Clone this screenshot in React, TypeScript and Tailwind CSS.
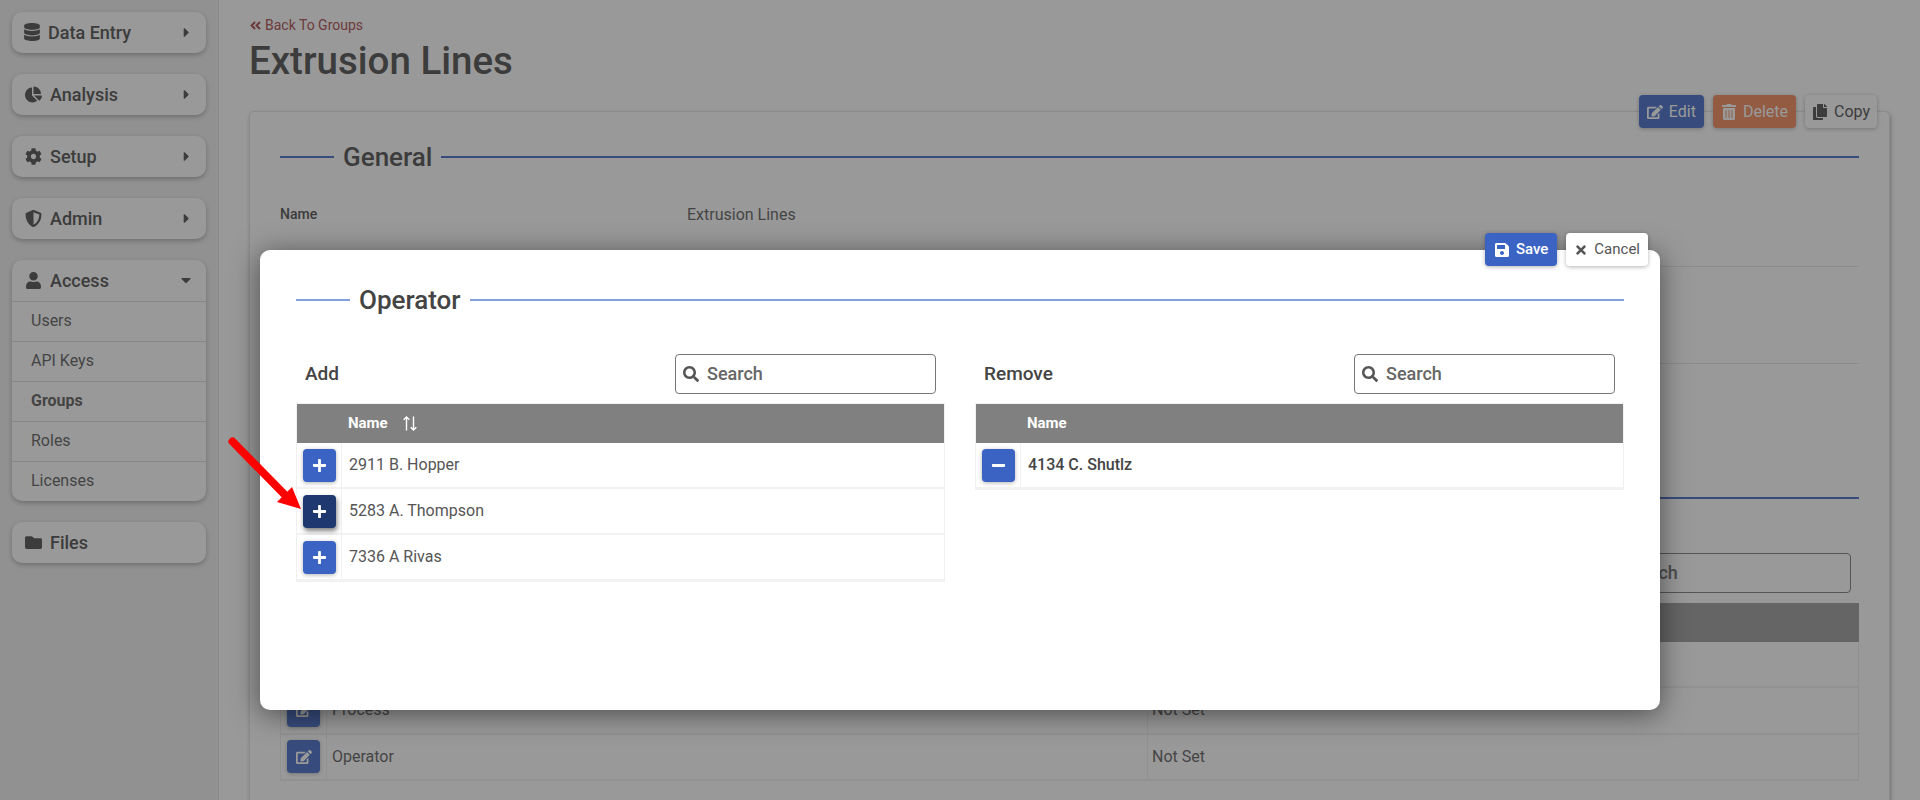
import { useState } from "react";
import {
  FaAngleDoubleLeft,
  FaCaretDown,
  FaCaretRight,
  FaChartPie,
  FaCog,
  FaCopy,
  FaDatabase,
  FaEdit,
  FaFolder,
  FaMinus,
  FaPlus,
  FaSave,
  FaSearch,
  FaShieldAlt,
  FaTimes,
  FaTrashAlt,
  FaUser,
} from "react-icons/fa";

const fontClass = "font-['Roboto','Liberation_Sans',sans-serif]";

function NavCard({
  icon,
  label,
  open,
  iconClass = "w-[18px]",
}: {
  icon: React.ReactNode;
  label: string;
  open?: boolean;
  iconClass?: string;
}) {
  return (
    <div className="flex h-[41px] items-center pb-[1px] pl-3 pr-3 text-[18px] font-medium text-[#444]">
      <span className={`mr-2 flex justify-center ${iconClass}`}>{icon}</span>
      <span className="flex-1">{label}</span>
      {open === undefined ? null : open ? <FaCaretDown size={16} /> : <FaCaretRight size={15} />}
    </div>
  );
}

function Sidebar() {
  const cardClass = "rounded-[10px] bg-white shadow-[0_2px_5px_rgba(0,0,0,0.3)]";
  const subItems = ["Users", "API Keys", "Groups", "Roles", "Licenses"];

  return (
    <aside className="flex w-[219px] shrink-0 flex-col gap-[21px] border-r border-[#dcdcdc] bg-[#efefef] pl-3 pr-3 pt-3">
      <div className={cardClass}>
        <NavCard icon={<FaDatabase size={18} />} iconClass="w-4" label="Data Entry" open={false} />
      </div>
      <div className={cardClass}>
        <NavCard icon={<FaChartPie size={17} />} label="Analysis" open={false} />
      </div>
      <div className={cardClass}>
        <NavCard icon={<FaCog size={17} />} label="Setup" open={false} />
      </div>
      <div className={cardClass}>
        <NavCard icon={<FaShieldAlt size={17} />} label="Admin" open={false} />
      </div>
      <div className={cardClass}>
        <NavCard icon={<FaUser size={17} />} label="Access" open={true} />
        {subItems.map((item) => (
          <div
            key={item}
            className={`flex h-10 items-center border-t border-[#d8d8d8] pl-[19px] pb-[2px] text-[16px] text-[#555] ${
              item === "Groups" ? "font-bold" : ""
            }`}
          >
            {item}
          </div>
        ))}
      </div>
      <div className={cardClass}>
        <NavCard icon={<FaFolder size={17} />} label="Files" />
      </div>
    </aside>
  );
}

function SectionTitle({ title, color }: { title: string; color: string }) {
  return (
    <div className="flex h-6 items-center gap-[9px]">
      <div className={`h-[2px] w-[54px] ${color}`} />
      <span className="text-[26px] font-medium leading-none text-[#444]">{title}</span>
      <div className={`h-[2px] flex-1 ${color}`} />
    </div>
  );
}

function SearchBox() {
  return (
    <div className="flex h-10 w-[261px] items-center gap-[8px] rounded border border-[#777] pl-[7px]">
      <FaSearch size={16} className="shrink-0 text-[#555]" />
      <input placeholder="Search" className="w-full bg-transparent pb-[2px] text-[18px] font-medium outline-none placeholder:text-[#666]" />
    </div>
  );
}

function ActionButton({ icon, label, className }: { icon: React.ReactNode; label: string; className: string }) {
  return (
    <button className={`flex h-[33px] items-center gap-[6px] rounded shadow-[0_1px_4px_rgba(0,0,0,0.3)] ${className}`}>
      {icon}
      {label}
    </button>
  );
}

// page under the modal
function DetailCard() {
  const rows = [
    { name: "Line", value: "" },
    { name: "Process", value: "Not Set" },
    { name: "Operator", value: "Not Set" },
  ];

  return (
    <div className="relative mt-[28px] h-[800px] rounded-[5px] border border-[#e2e2e2] bg-white px-[30px] pt-[33px] shadow-[1px_2px_4px_rgba(0,0,0,0.3)]">
      <div className="absolute -top-[17px] right-[12px] flex gap-[9px]">
        <ActionButton icon={<FaEdit size={16} />} label="Edit" className="bg-[#3a63c4] px-[8px] text-[16px] text-white" />
        <ActionButton icon={<FaTrashAlt size={16} />} label="Delete" className="bg-[#f08250] px-[8px] text-[16px] text-white" />
        <ActionButton icon={<FaCopy size={16} />} label="Copy" className="bg-white px-[7px] text-[16px] text-[#444]" />
      </div>

      <SectionTitle title="General" color="bg-[#3a63c4]" />

      <div className="mt-[21px] flex h-[77px] items-start border-b border-[#e4e4e4] pt-[14px] text-[#444]">
        <span className="w-[407px] text-[14px] font-medium">Name</span>
        <span className="-mt-[1px] text-[16px] text-[#555]">Extrusion Lines</span>
      </div>
      <div className="h-[97px] border-b border-[#e4e4e4]" />
      <div className="h-[135px] pt-[133px]">
        <div className="h-[2px] bg-[#3a63c4]" />
      </div>

      <div className="mt-[54px] flex justify-end pr-[8px]">
        <SearchBox />
      </div>

      <div className="mt-[10px] flex h-[39px] items-center bg-[#969696]" />
      {rows.map((row) => (
        <div key={row.name} className="flex h-[46.3px] items-center border-x border-b-2 border-[#eee] text-[16px] text-[#555]">
          <div className="flex h-full w-[46px] items-center justify-center border-r border-[#eee]">
            <span className="flex h-[33px] w-[33px] items-center justify-center rounded bg-[#3a63c4] text-white shadow-[0_1px_4px_rgba(0,0,0,0.3)]">
              <FaEdit size={16} />
            </span>
          </div>
          <div className="flex h-full w-[821px] items-center border-r border-[#eee] pl-[5px]">{row.name}</div>
          <div className="pl-[4px]">{row.value}</div>
        </div>
      ))}
    </div>
  );
}

function PersonTable({
  rows,
  sortable,
  minus,
}: {
  rows: { name: string; active?: boolean }[];
  sortable?: boolean;
  minus?: boolean;
}) {
  return (
    <div className="border border-[#f0f0f0]">
      <div className="flex h-[39px] items-center bg-[#808080] pl-[51px] text-[15px] font-bold text-white">
        Name
        {sortable && (
          <svg viewBox="0 0 16 16" className="ml-[14px] h-[17px] w-[16px]" fill="none" stroke="white" strokeWidth="1.4">
            <path d="M4.5 15V1.5M1.7 4.3 4.5 1.5l2.8 2.8M11.5 1v13.5M8.7 11.7l2.8 2.8 2.8-2.8" />
          </svg>
        )}
      </div>
      {rows.map((row) => (
        <div key={row.name} className="flex h-[46px] items-center border-b-2 border-[#f2f2f2] text-[16px] text-[#555]">
          <div className="flex h-full w-[45px] items-center justify-center border-r border-[#f2f2f2]">
            <button
              className={`flex h-[33px] w-[33px] items-center justify-center rounded text-white ${
                row.active
                  ? "bg-[#1f3870] shadow-[1px_3px_5px_rgba(0,0,0,0.5)]"
                  : "bg-[#3a63c4] shadow-[0_1px_4px_rgba(0,0,0,0.3)]"
              }`}
            >
              {minus ? <FaMinus size={15} /> : <FaPlus size={15} />}
            </button>
          </div>
          <span className={`pl-[7px] ${minus ? "font-medium text-[#444]" : ""}`}>{row.name}</span>
        </div>
      ))}
    </div>
  );
}

function OperatorModal() {
  const [addRows] = useState([
    { name: "2911 B. Hopper" },
    { name: "5283 A. Thompson", active: true },
    { name: "7336 A Rivas" },
  ]);

  return (
    <div className="absolute left-[260px] top-[250px] h-[460px] w-[1400px] rounded-[10px] bg-white px-9 pt-[38px] shadow-[0_4px_28px_rgba(0,0,0,0.5)]">
      <div className="absolute -top-[17px] right-[12px] flex gap-[9px]">
        <ActionButton icon={<FaSave size={16} />} label="Save" className="bg-[#3a63c4] px-[9px] text-[15px] font-medium text-white" />
        <ActionButton icon={<FaTimes size={14} />} label="Cancel" className="bg-white px-[8px] text-[15px] text-[#555]" />
      </div>

      <SectionTitle title="Operator" color="bg-[#86a0dd]" />

      <div className="mt-[42px] grid grid-cols-2 gap-[30px]">
        <div>
          <div className="flex items-center justify-between pl-[9px] pr-[9px]">
            <span className="text-[19px] font-medium text-[#444]">Add</span>
            <SearchBox />
          </div>
          <div className="mt-[9px]">
            <PersonTable rows={addRows} sortable />
          </div>
        </div>
        <div>
          <div className="flex items-center justify-between pl-[9px] pr-[9px]">
            <span className="text-[19px] font-medium text-[#444]">Remove</span>
            <SearchBox />
          </div>
          <div className="mt-[9px]">
            <PersonTable rows={[{ name: "4134 C. Shutlz" }]} minus />
          </div>
        </div>
      </div>

      {/* arrow pointing at the button */}
      <svg viewBox="0 0 80 80" className="absolute left-[-32px] top-[187px] h-20 w-20" fill="#ff0000">
        <path d="M4.5 4.5 L57 58" stroke="#ff0000" strokeWidth="8" strokeLinecap="round" />
        <path d="M49 65 L64 50 L73 72 Z" />
      </svg>
    </div>
  );
}

export default function App() {
  return (
    <div className={`relative flex h-[800px] w-full overflow-hidden bg-white ${fontClass}`}>
      <Sidebar />
      <main className="flex-1 pl-[30px] pr-[30px] pt-[15px]">
        <div className="flex items-center gap-[3px] text-[14px] text-[#a44242]">
          <FaAngleDoubleLeft size={13} />
          Back To Groups
        </div>
        <h1 className="mt-[3px] text-[38.5px] font-medium leading-[44px] text-[#444]">Extrusion Lines</h1>
        <DetailCard />
      </main>
      {/* dimmed backdrop */}
      <div className="absolute inset-0 bg-[#333333]/50" />
      <OperatorModal />
    </div>
  );
}
